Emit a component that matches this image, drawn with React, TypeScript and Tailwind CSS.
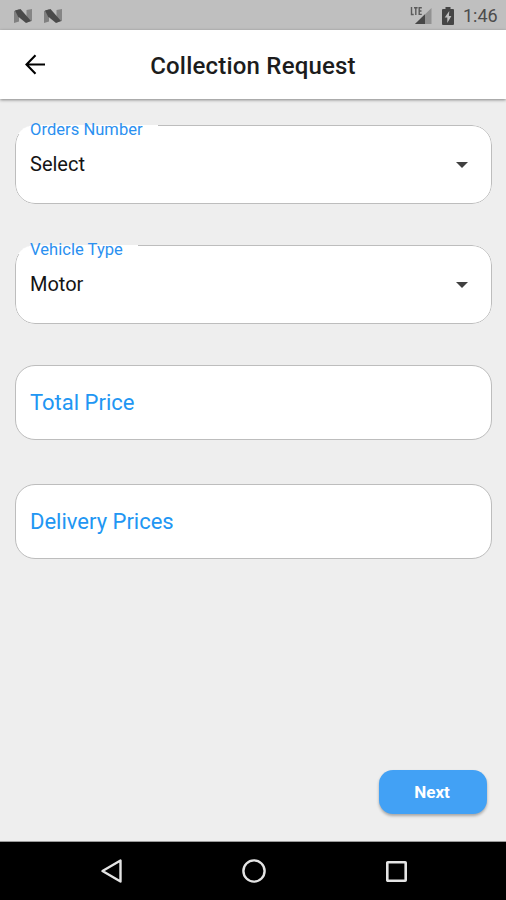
import { ReactNode } from 'react';

interface SelectFieldProps {
  label: string;
  value: string;
  notch: string;
}

const NougatIcon = () => (
  <svg width="18" height="14" viewBox="0 0 18 14">
    <path d="M0 2 5 .5v12L0 14z" fill="#808080" />
    <path d="M12.500 1 18 0v12l-5.500 1.500z" fill="#858585" />
    <path d="M1 1.500 6.500 0 17 12l-5 2L4 7.500z" fill="#4a4a4a" />
  </svg>
);

const StatusBar = () => (
  <div className="flex h-[30px] shrink-0 items-center bg-[#bfbfbf] pl-3.5 pr-[8px] pt-px">
    <div className="flex gap-3">
      <NougatIcon />
      <NougatIcon />
    </div>
    <div className="ml-auto flex items-center">
      <svg width="22" height="18" viewBox="0 0 22 18">
        <path d="M21.500 1v16H5z" fill="#929292" />
        <path d="M15 7.300V17H5z" fill="#484848" />
        <path
          d="M1.500 0v7.500h2.200M4 .700h3.600M5.800 .700v7.300M11.800 .700H9.200v6.700h2.600M9.200 4h2.300"
          fill="none"
          stroke="#5a5a5a"
          strokeWidth="1.4"
        />
      </svg>
      <svg className="ml-[10px]" width="12" height="18" viewBox="0 0 12 18">
        <path d="M3.500 0h5v2H11a1 1 0 0 1 1 1v14a1 1 0 0 1-1 1H1a1 1 0 0 1-1-1V3a1 1 0 0 1 1-1h2.500z" fill="#454545" />
        <path d="M7.300 4 2.700 10.500h2.600V16L9.400 9H6.900z" fill="#bfbfbf" />
      </svg>
      <span className="ml-[9px] w-[35px] whitespace-nowrap text-[18px] leading-[29px] text-[#4c4c4c]">1:46</span>
    </div>
  </div>
);

const AppBar = () => (
  <header className="relative z-10 flex h-[69px] shrink-0 items-center justify-center bg-white pt-[2px] shadow-[0_1px_3px_rgba(0,0,0,0.45)]">
    <button className="absolute left-[25px] top-[24px]" aria-label="Back">
      <svg width="21" height="21" viewBox="0 0 21 21" fill="none" stroke="#000" strokeWidth="2.1">
        <path d="M20 10.500H2M10.500 1.300 1.500 10.500l9 9.200" />
      </svg>
    </button>
    <h1 className="whitespace-nowrap text-[24px] font-medium tracking-[0.2px] text-[#1c1c1c]">Collection Request</h1>
  </header>
);

const SelectField = ({ label, value, notch }: SelectFieldProps) => (
  <div className="relative h-[79px]">
    <div className="relative flex h-full items-center overflow-hidden rounded-[20px] bg-white px-[15px]">
      <div className="absolute inset-0 rounded-[20px] border border-[#bdbdbd]"></div>
      {/* Opens the outline behind the floating label */}
      <div className={`absolute left-[3px] top-0 h-[9px] bg-white ${notch}`}></div>
      <span className="relative -mt-0.5 text-[20px] leading-6 text-[#141414]">{value}</span>
      <svg className="relative ml-auto mr-[9px]" width="12" height="6" viewBox="0 0 12 6">
        <path d="M0 0h12L6 6z" fill="#404040" />
      </svg>
    </div>
    <span className="absolute -top-[5px] left-[15px] whitespace-nowrap text-[16.5px] leading-5 tracking-[0.05px] text-[#2b90f0]">{label}</span>
  </div>
);

const InputField = ({ children }: { children: ReactNode }) => (
  <div className="flex h-[75px] items-center rounded-[20px] border border-[#bdbdbd] bg-white px-[14px] text-[22px] text-[#2196f3]">
    {children}
  </div>
);

const NavBar = () => (
  <nav className="flex h-[58px] shrink-0 items-center justify-between bg-black pl-[100px] pr-[99px]">
    <svg width="22" height="26" viewBox="0 0 22 26" fill="none" stroke="#e4e4e4" strokeWidth="2.4">
      <path d="M20.500 2.500v21L2.500 13z" strokeLinejoin="round" />
    </svg>
    <svg width="24" height="24" viewBox="0 0 24 24" fill="none" stroke="#e4e4e4" strokeWidth="2.4">
      <circle cx="12" cy="12" r="10.600" />
    </svg>
    <svg width="21" height="21" viewBox="0 0 21 21" fill="none" stroke="#e4e4e4" strokeWidth="2.6">
      <rect x="1.300" y="1.300" width="18.400" height="18.400" rx="0.500" />
    </svg>
  </nav>
);

const App = () => {
  return (
    <div className="flex h-[900px] w-[506px] flex-col overflow-hidden bg-[#eeeeee] font-[Roboto,sans-serif]">
      <StatusBar />
      <AppBar />
      <main className="flex flex-1 flex-col pl-[15px] pr-[14px] pt-[26px]">
        <SelectField label="Orders Number" value="Select" notch="w-[140px]" />
        <div className="h-[41px]"></div>
        <SelectField label="Vehicle Type" value="Motor" notch="w-[120px]" />
        <div className="h-[41px]"></div>
        <InputField>Total Price</InputField>
        <div className="h-11"></div>
        <InputField>Delivery Prices</InputField>
        <button className="mb-[27px] mr-[5px] mt-auto h-[44px] w-[108px] self-end rounded-[14px] bg-[#42a1f5] pr-[2px] pt-[2px] text-[17px] font-bold text-white shadow-[0_2px_3px_rgba(0,0,0,0.3)]">
          Next
        </button>
      </main>
      <div className="h-px shrink-0 bg-[#9a9a9a]"></div>
      <NavBar />
    </div>
  );
};

export default App;
